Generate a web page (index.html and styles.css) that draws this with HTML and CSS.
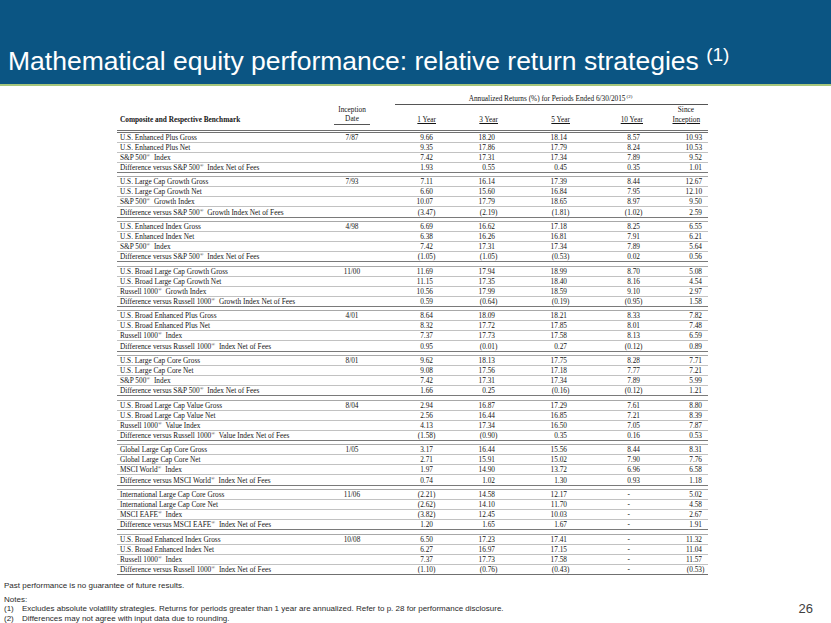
FILE: index.html
```html
<!DOCTYPE html>
<html>
<head>
<meta charset="utf-8">
<link rel="stylesheet" href="styles.css">
</head>
<body>
<div class="titlebar">
  <h1 class="title">Mathematical equity performance: relative return strategies <sup class="tsup">(1)</sup></h1>
</div>
<table class="perf">
  <colgroup>
    <col class="c-label"><col class="c-inc"><col class="c-y1"><col class="c-y3"><col class="c-y5"><col class="c-y10"><col class="c-si">
  </colgroup>
  <thead>
    <tr class="hA"><td colspan="2"></td><td colspan="5"><div class="ann">Annualized Returns (%) for Periods Ended 6/30/2015<sup class="s2">(2)</sup></div></td></tr>
    <tr class="hB"><td></td><td class="ctr">Inception</td><td></td><td></td><td></td><td></td><td class="since">Since</td></tr>
    <tr class="hC"><td class="lbl bold">Composite and Respective Benchmark</td><td class="ctr"><span class="date">Date</span></td><td class="hy"><u>1 Year</u></td><td class="hy"><u>3 Year</u></td><td class="hy"><u>5 Year</u></td><td class="hy"><u>10 Year</u></td><td class="hy hsi"><u>Inception</u></td></tr>
  </thead>
  <tbody>
    <tr><td class="lbl">U.S. Enhanced Plus Gross</td><td class="ctr">7/87</td><td class="n">9.66</td><td class="n">18.20</td><td class="n">18.14</td><td class="n">8.57</td><td class="n si">10.93</td></tr>
    <tr><td class="lbl">U.S. Enhanced Plus Net</td><td></td><td class="n">9.35</td><td class="n">17.86</td><td class="n">17.79</td><td class="n">8.24</td><td class="n si">10.53</td></tr>
    <tr><td class="lbl">S&amp;P 500<sup>®</sup> Index</td><td></td><td class="n">7.42</td><td class="n">17.31</td><td class="n">17.34</td><td class="n">7.89</td><td class="n si">9.52</td></tr>
    <tr class="last"><td class="lbl">Difference versus S&amp;P 500<sup>®</sup> Index Net of Fees</td><td></td><td class="n">1.93</td><td class="n">0.55</td><td class="n">0.45</td><td class="n">0.35</td><td class="n si">1.01</td></tr>
    <tr class="sep"><td colspan="7"></td></tr>

    <tr><td class="lbl">U.S. Large Cap Growth Gross</td><td class="ctr">7/93</td><td class="n">7.11</td><td class="n">16.14</td><td class="n">17.39</td><td class="n">8.44</td><td class="n si">12.67</td></tr>
    <tr><td class="lbl">U.S. Large Cap Growth Net</td><td></td><td class="n">6.60</td><td class="n">15.60</td><td class="n">16.84</td><td class="n">7.95</td><td class="n si">12.10</td></tr>
    <tr><td class="lbl">S&amp;P 500<sup>®</sup> Growth Index</td><td></td><td class="n">10.07</td><td class="n">17.79</td><td class="n">18.65</td><td class="n">8.97</td><td class="n si">9.50</td></tr>
    <tr class="last"><td class="lbl">Difference versus S&amp;P 500<sup>®</sup> Growth Index Net of Fees</td><td></td><td class="n"><span class="neg">(3.47)</span></td><td class="n"><span class="neg">(2.19)</span></td><td class="n"><span class="neg">(1.81)</span></td><td class="n"><span class="neg">(1.02)</span></td><td class="n si">2.59</td></tr>
    <tr class="sep"><td colspan="7"></td></tr>

    <tr><td class="lbl">U.S. Enhanced Index Gross</td><td class="ctr">4/98</td><td class="n">6.69</td><td class="n">16.62</td><td class="n">17.18</td><td class="n">8.25</td><td class="n si">6.55</td></tr>
    <tr><td class="lbl">U.S. Enhanced Index Net</td><td></td><td class="n">6.38</td><td class="n">16.26</td><td class="n">16.81</td><td class="n">7.91</td><td class="n si">6.21</td></tr>
    <tr><td class="lbl">S&amp;P 500<sup>®</sup> Index</td><td></td><td class="n">7.42</td><td class="n">17.31</td><td class="n">17.34</td><td class="n">7.89</td><td class="n si">5.64</td></tr>
    <tr class="last"><td class="lbl">Difference versus S&amp;P 500<sup>®</sup> Index Net of Fees</td><td></td><td class="n"><span class="neg">(1.05)</span></td><td class="n"><span class="neg">(1.05)</span></td><td class="n"><span class="neg">(0.53)</span></td><td class="n">0.02</td><td class="n si">0.56</td></tr>
    <tr class="sep"><td colspan="7"></td></tr>

    <tr><td class="lbl">U.S. Broad Large Cap Growth Gross</td><td class="ctr">11/00</td><td class="n">11.69</td><td class="n">17.94</td><td class="n">18.99</td><td class="n">8.70</td><td class="n si">5.08</td></tr>
    <tr><td class="lbl">U.S. Broad Large Cap Growth Net</td><td></td><td class="n">11.15</td><td class="n">17.35</td><td class="n">18.40</td><td class="n">8.16</td><td class="n si">4.54</td></tr>
    <tr><td class="lbl">Russell 1000<sup>®</sup> Growth Index</td><td></td><td class="n">10.56</td><td class="n">17.99</td><td class="n">18.59</td><td class="n">9.10</td><td class="n si">2.97</td></tr>
    <tr class="last"><td class="lbl">Difference versus Russell 1000<sup>®</sup> Growth Index Net of Fees</td><td></td><td class="n">0.59</td><td class="n"><span class="neg">(0.64)</span></td><td class="n"><span class="neg">(0.19)</span></td><td class="n"><span class="neg">(0.95)</span></td><td class="n si">1.58</td></tr>
    <tr class="sep"><td colspan="7"></td></tr>

    <tr><td class="lbl">U.S. Broad Enhanced Plus Gross</td><td class="ctr">4/01</td><td class="n">8.64</td><td class="n">18.09</td><td class="n">18.21</td><td class="n">8.33</td><td class="n si">7.82</td></tr>
    <tr><td class="lbl">U.S. Broad Enhanced Plus Net</td><td></td><td class="n">8.32</td><td class="n">17.72</td><td class="n">17.85</td><td class="n">8.01</td><td class="n si">7.48</td></tr>
    <tr><td class="lbl">Russell 1000<sup>®</sup> Index</td><td></td><td class="n">7.37</td><td class="n">17.73</td><td class="n">17.58</td><td class="n">8.13</td><td class="n si">6.59</td></tr>
    <tr class="last"><td class="lbl">Difference versus Russell 1000<sup>®</sup> Index Net of Fees</td><td></td><td class="n">0.95</td><td class="n"><span class="neg">(0.01)</span></td><td class="n">0.27</td><td class="n"><span class="neg">(0.12)</span></td><td class="n si">0.89</td></tr>
    <tr class="sep"><td colspan="7"></td></tr>

    <tr><td class="lbl">U.S. Large Cap Core Gross</td><td class="ctr">8/01</td><td class="n">9.62</td><td class="n">18.13</td><td class="n">17.75</td><td class="n">8.28</td><td class="n si">7.71</td></tr>
    <tr><td class="lbl">U.S. Large Cap Core Net</td><td></td><td class="n">9.08</td><td class="n">17.56</td><td class="n">17.18</td><td class="n">7.77</td><td class="n si">7.21</td></tr>
    <tr><td class="lbl">S&amp;P 500<sup>®</sup> Index</td><td></td><td class="n">7.42</td><td class="n">17.31</td><td class="n">17.34</td><td class="n">7.89</td><td class="n si">5.99</td></tr>
    <tr class="last"><td class="lbl">Difference versus S&amp;P 500<sup>®</sup> Index Net of Fees</td><td></td><td class="n">1.66</td><td class="n">0.25</td><td class="n"><span class="neg">(0.16)</span></td><td class="n"><span class="neg">(0.12)</span></td><td class="n si">1.21</td></tr>
    <tr class="sep"><td colspan="7"></td></tr>

    <tr><td class="lbl">U.S. Broad Large Cap Value Gross</td><td class="ctr">8/04</td><td class="n">2.94</td><td class="n">16.87</td><td class="n">17.29</td><td class="n">7.61</td><td class="n si">8.80</td></tr>
    <tr><td class="lbl">U.S. Broad Large Cap Value Net</td><td></td><td class="n">2.56</td><td class="n">16.44</td><td class="n">16.85</td><td class="n">7.21</td><td class="n si">8.39</td></tr>
    <tr><td class="lbl">Russell 1000<sup>®</sup> Value Index</td><td></td><td class="n">4.13</td><td class="n">17.34</td><td class="n">16.50</td><td class="n">7.05</td><td class="n si">7.87</td></tr>
    <tr class="last"><td class="lbl">Difference versus Russell 1000<sup>®</sup> Value Index Net of Fees</td><td></td><td class="n"><span class="neg">(1.58)</span></td><td class="n"><span class="neg">(0.90)</span></td><td class="n">0.35</td><td class="n">0.16</td><td class="n si">0.53</td></tr>
    <tr class="sep"><td colspan="7"></td></tr>

    <tr><td class="lbl">Global Large Cap Core Gross</td><td class="ctr">1/05</td><td class="n">3.17</td><td class="n">16.44</td><td class="n">15.56</td><td class="n">8.44</td><td class="n si">8.31</td></tr>
    <tr><td class="lbl">Global Large Cap Core Net</td><td></td><td class="n">2.71</td><td class="n">15.91</td><td class="n">15.02</td><td class="n">7.90</td><td class="n si">7.76</td></tr>
    <tr><td class="lbl">MSCI World<sup>®</sup> Index</td><td></td><td class="n">1.97</td><td class="n">14.90</td><td class="n">13.72</td><td class="n">6.96</td><td class="n si">6.58</td></tr>
    <tr class="last"><td class="lbl">Difference versus MSCI World<sup>®</sup> Index Net of Fees</td><td></td><td class="n">0.74</td><td class="n">1.02</td><td class="n">1.30</td><td class="n">0.93</td><td class="n si">1.18</td></tr>
    <tr class="sep"><td colspan="7"></td></tr>

    <tr><td class="lbl">International Large Cap Core Gross</td><td class="ctr">11/06</td><td class="n"><span class="neg">(2.21)</span></td><td class="n">14.58</td><td class="n">12.17</td><td class="n"><span class="dash">-</span></td><td class="n si">5.02</td></tr>
    <tr><td class="lbl">International Large Cap Core Net</td><td></td><td class="n"><span class="neg">(2.62)</span></td><td class="n">14.10</td><td class="n">11.70</td><td class="n"><span class="dash">-</span></td><td class="n si">4.58</td></tr>
    <tr><td class="lbl">MSCI EAFE<sup>®</sup> Index</td><td></td><td class="n"><span class="neg">(3.82)</span></td><td class="n">12.45</td><td class="n">10.03</td><td class="n"><span class="dash">-</span></td><td class="n si">2.67</td></tr>
    <tr class="last"><td class="lbl">Difference versus MSCI EAFE<sup>®</sup> Index Net of Fees</td><td></td><td class="n">1.20</td><td class="n">1.65</td><td class="n">1.67</td><td class="n"><span class="dash">-</span></td><td class="n si">1.91</td></tr>
    <tr class="sep"><td colspan="7"></td></tr>

    <tr><td class="lbl">U.S. Broad Enhanced Index Gross</td><td class="ctr">10/08</td><td class="n">6.50</td><td class="n">17.23</td><td class="n">17.41</td><td class="n"><span class="dash">-</span></td><td class="n si">11.32</td></tr>
    <tr><td class="lbl">U.S. Broad Enhanced Index Net</td><td></td><td class="n">6.27</td><td class="n">16.97</td><td class="n">17.15</td><td class="n"><span class="dash">-</span></td><td class="n si">11.04</td></tr>
    <tr><td class="lbl">Russell 1000<sup>®</sup> Index</td><td></td><td class="n">7.37</td><td class="n">17.73</td><td class="n">17.58</td><td class="n"><span class="dash">-</span></td><td class="n si">11.57</td></tr>
    <tr class="final"><td class="lbl">Difference versus Russell 1000<sup>®</sup> Index Net of Fees</td><td></td><td class="n"><span class="neg">(1.10)</span></td><td class="n"><span class="neg">(0.76)</span></td><td class="n"><span class="neg">(0.43)</span></td><td class="n"><span class="dash">-</span></td><td class="n si"><span class="neg">(0.53)</span></td></tr>
  </tbody>
</table>
<div class="footer">
  <div class="notes">
    <p class="past">Past performance is no guarantee of future results.</p>
    <p class="noteshead">Notes:</p>
    <p class="note"><span class="num">(1)</span><span>Excludes absolute volatility strategies. Returns for periods greater than 1 year are annualized. Refer to p. 28 for performance disclosure.</span></p>
    <p class="note"><span class="num">(2)</span><span>Differences may not agree with input data due to rounding.</span></p>
  </div>
  <div class="pagenum">26</div>
</div>
</body>
</html>
```

FILE: styles.css
```css
html, body {
  margin: 0;
  padding: 0;
  background: #ffffff;
}
body {
  width: 831px;
  height: 623px;
  overflow: hidden;
  font-family: "Liberation Sans", Arial, sans-serif;
}
.titlebar {
  height: 84px;
  background: #0b5583;
  border-bottom: 2px solid #a6c67c;
  box-sizing: content-box;
}
.title {
  margin: 0;
  padding: 46px 0 0 8px;
  font-family: "Liberation Sans", Arial, sans-serif;
  font-weight: normal;
  font-size: 26.5px;
  line-height: 31px;
  color: #ffffff;
  white-space: nowrap;
}
.tsup {
  font-size: 19px;
  line-height: 0;
  vertical-align: 9px;
}

/* table */
.perf {
  margin: 8.5px 0 0 117px;
  width: 591px;
  table-layout: fixed;
  border-collapse: separate;
  border-spacing: 0;
  font-family: "Liberation Serif", "Times New Roman", serif;
  font-size: 7.3px;
  line-height: 9px;
  color: #141414;
}
.c-label { width: 205px; }
.c-inc { width: 60px; }
.c-y1 { width: 54px; }
.c-y3 { width: 62px; }
.c-y5 { width: 72px; }
.c-y10 { width: 73px; }
.c-si { width: 65px; }

.perf td {
  padding: 0;
  white-space: nowrap;
  overflow: visible;
}
.perf sup {
  font-size: 5px;
  line-height: 0;
  vertical-align: 3px;
  margin-right: 2px;
}
.ann {
  margin-left: 13px;
  text-align: center;
  line-height: 8px;
  padding-bottom: 1px;
  border-bottom: 1px solid #555555;
}
.ann .s2 {
  margin-left: 1px;
}
.hB td {
  height: 9px;
}
.hC td {
  height: 9px;
  padding-bottom: 5px;
  border-bottom: 3px double #707070;
}
.ctr {
  text-align: center;
}
.since {
  text-align: right;
  padding-right: 14px !important;
}
.lbl {
  padding-left: 3px !important;
}
.bold {
  font-weight: bold;
}
.date {
  display: inline-block;
  padding: 0 11px;
  border-bottom: 1px solid #555555;
  line-height: 8px;
  padding-bottom: 1px;
}
.hy {
  text-align: right;
}
.hsi {
  padding-right: 8px !important;
}
.hy u {
  text-decoration: underline;
  text-underline-offset: 1px;
}

tbody tr td {
  height: 9.1px;
  border-bottom: 1px solid #c2c2c2;
}
tbody tr.last td {
  border-bottom: none;
}
tbody tr.final td {
  border-bottom: 1px solid #707070;
}
tbody tr.sep td {
  height: 3.3px;
  border-top: 1px solid #7a7a7a;
  border-bottom: 1px solid #a8a8a8;
  line-height: 0;
  font-size: 0;
}
.n {
  text-align: right;
  padding-right: 3px !important;
}
.n.si {
  padding-right: 6px !important;
}
.neg {
  margin-right: -2.43px;
}
.dash {
  margin-right: 10px;
}

/* footer */
.footer {
  display: flex;
  justify-content: space-between;
  align-items: flex-end;
  padding-left: 4px;
  margin-top: 6px;
  font-family: "Liberation Sans", Arial, sans-serif;
  font-size: 8px;
  line-height: 9.5px;
  color: #2a2a2a;
}
.notes p {
  margin: 0;
}
.past {
  margin-bottom: 4.5px !important;
}
.note {
  display: flex;
}
.num {
  width: 18px;
  flex: none;
}
.pagenum {
  font-size: 13px;
  line-height: 13px;
  color: #404040;
  margin: 0 18px 8px 0;
}
```
